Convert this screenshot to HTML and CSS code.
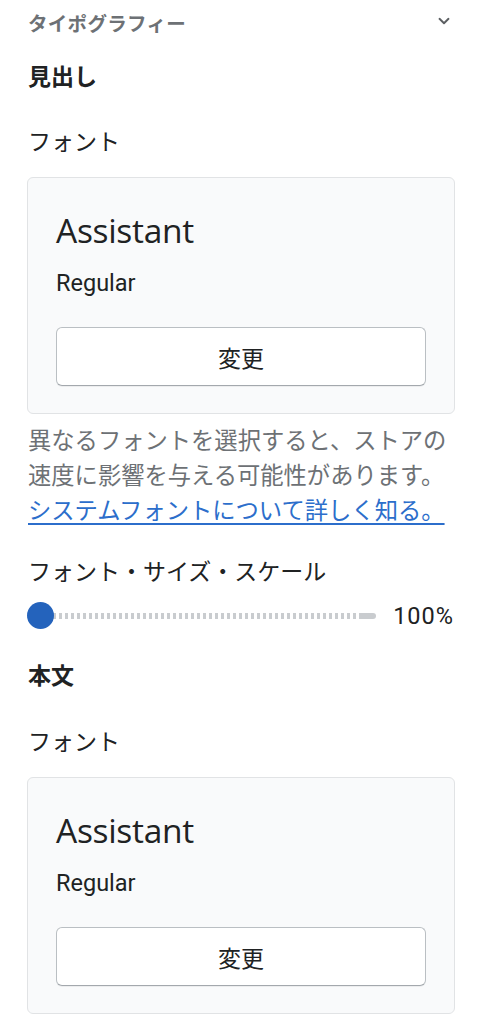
FILE: index.html
```html
<!DOCTYPE html>
<html lang="ja">
<head>
<meta charset="utf-8">
<link rel="stylesheet" href="styles.css">
</head>
<body>
<div class="panel">
  <div class="section-header">
    <span class="section-title">タイポグラフィー</span>
    <svg class="chevron" width="14" height="14" viewBox="0 0 14 14"><path d="M2.5 4.8 L7 9.2 L11.5 4.8" fill="none" stroke="#5c5f62" stroke-width="1.9" stroke-linecap="round" stroke-linejoin="round"/></svg>
  </div>

  <div class="subheading">見出し</div>
  <div class="label label-font">フォント</div>
  <div class="font-card">
    <div class="font-name">Assistant</div>
    <div class="font-style">Regular</div>
    <button class="change-btn">変更</button>
  </div>
  <p class="help">異なるフォントを選択すると、ストアの速度に影響を与える可能性があります。<a href="#" class="help-link">システムフォントについて詳しく知る。</a></p>

  <div class="label label-scale">フォント・サイズ・スケール</div>
  <div class="slider-row">
    <div class="slider">
      <div class="track"></div>
      <div class="thumb"></div>
    </div>
    <span class="slider-value">100%</span>
  </div>

  <div class="subheading subheading-body">本文</div>
  <div class="label label-font2">フォント</div>
  <div class="font-card">
    <div class="font-name">Assistant</div>
    <div class="font-style">Regular</div>
    <button class="change-btn">変更</button>
  </div>
</div>
</body>
</html>
```

FILE: styles.css
```css
* { box-sizing: border-box; }
html, body {
  margin: 0;
  padding: 0;
  background: #ffffff;
}
body {
  font-family: "Roboto", "Noto Sans CJK JP", sans-serif;
  color: #202223;
}
.panel {
  padding: 0 28px 0 28px;
  width: 482px;
}
.section-header {
  height: 44px;
  display: flex;
  align-items: center;
  justify-content: space-between;
  padding-right: 2px;
}
.section-title {
  font-size: 19.5px;
  font-weight: 600;
  color: #6d7175;
  letter-spacing: 0.3px;
}
.chevron { display: block; margin-top: -2px; margin-right: 1px; }
.subheading {
  margin-top: 16px;
  height: 36px;
  line-height: 36px;
  font-size: 23px;
  font-weight: 700;
  color: #202223;
}
.label {
  height: 36px;
  line-height: 36px;
  font-size: 23px;
  color: #202223;
}
.label-font { margin-top: 29px; }
.font-card {
  margin-top: 16px;
  margin-left: -1px;
  margin-right: -1px;
  border: 1px solid #e1e3e5;
  border-radius: 6px;
  background: #f9fafb;
  padding: 30px 28px 27px 28px;
}
.font-name {
  font-family: "Open Sans", sans-serif;
  font-size: 33.5px;
  line-height: 44px;
  height: 44px;
  color: #202223;
  letter-spacing: -0.3px;
}
.font-style {
  margin-top: 15px;
  font-size: 23.5px;
  line-height: 32px;
  height: 32px;
  color: #202223;
}
.change-btn {
  margin-top: 28px;
  display: block;
  width: 100%;
  height: 59px;
  border: 1px solid #babfc3;
  border-bottom-color: #a3a8ad;
  border-radius: 6px;
  background: #ffffff;
  box-shadow: 0 1px 0 rgba(0,0,0,0.05);
  font-family: "Noto Sans CJK JP", sans-serif;
  font-size: 23px;
  color: #202223;
}
.help {
  margin: 8px 0 0 0;
  font-size: 23.3px;
  line-height: 35px;
  color: #6d7175;
  font-family: "Noto Sans CJK JP", sans-serif;
}
.help-link {
  color: #2c6ecb;
  text-decoration: underline;
  text-underline-offset: 4px;
  text-decoration-thickness: 1.5px;
}
.label-scale { margin-top: 28px; height: 35px; line-height: 35px; }
.slider-row {
  margin-top: 8px;
  height: 36px;
  display: flex;
  align-items: center;
  gap: 17px;
}
.slider {
  position: relative;
  flex: 1;
  height: 28px;
  display: flex;
  align-items: center;
}
.track {
  margin-left: 13px;
  flex: 1;
  height: 6px;
  border-radius: 3px;
  background:
    linear-gradient(#c9cccf, #c9cccf) right / 14px 6px no-repeat,
    repeating-linear-gradient(90deg, #c9cccf 0 3px, transparent 3px 6px);
}
.thumb {
  position: absolute;
  left: -1px;
  top: 0;
  width: 27px;
  height: 27px;
  border-radius: 50%;
  background: #2463bc;
}
.slider-value {
  font-size: 23.5px;
  color: #202223;
  letter-spacing: 1px;
}
.subheading-body { margin-top: 25px; }
.label-font2 { margin-top: 30px; }
```
